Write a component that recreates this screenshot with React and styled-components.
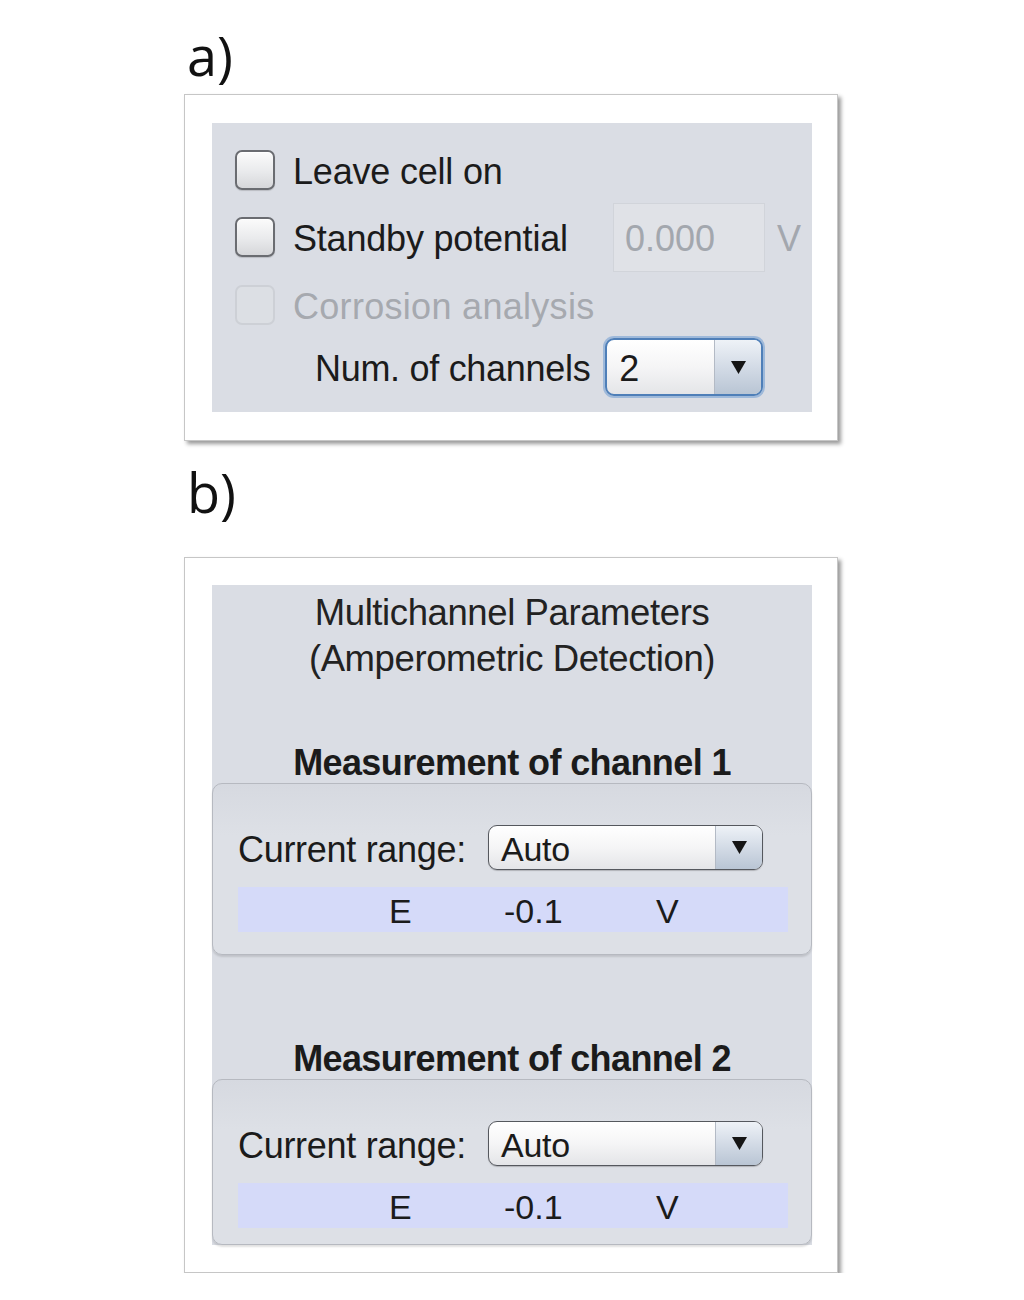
import React from 'react';
import styled, { createGlobalStyle } from 'styled-components';

const GlobalStyle = createGlobalStyle`
    body {
        margin: 0;
        background: #ffffff;
    }
`

const Page = styled.div`
    display: flex;
    flex-direction: column;
    width: 654px;
    padding: 28px 0 0 184px;
    font-family: "Liberation Sans", Arial, sans-serif;
    color: #1b1b1b;
`

const FigureLabel = styled.div`
    font-family: "Open Sans", "Noto Sans", sans-serif;
    font-size: 54px;
    line-height: 54px;
    color: #111;
    padding-left: 3px;
    margin-top: ${p => p.top || 0}px;
    margin-bottom: ${p => p.bottom}px;
`

const Card = styled.div`
    box-sizing: border-box;
    width: 654px;
    background: #fff;
    border: 1px solid #c6c6c6;
    box-shadow: 3px 3px 4px rgba(0, 0, 0, 0.4);
    padding: ${p => p.pad};
`

const Panel = styled.div`
    background: #dadde4;
    display: flex;
    flex-direction: column;
    padding: ${p => p.pad};
`

const Row = styled.div`
    display: flex;
    align-items: center;
    height: ${p => p.h || 40}px;
    margin-top: ${p => p.mt || 0}px;
    padding-left: ${p => p.pl || 0}px;
`

const Check = styled.div`
    box-sizing: border-box;
    width: 40px;
    height: 40px;
    flex: none;
    border-radius: 7px;
    border: 2px solid ${p => p.disabled ? '#cdd0d6' : '#6a6c71'};
    background: ${p => p.disabled
        ? '#dcdfe4'
        : 'linear-gradient(#fbfbfb, #e9eaec 55%, #d6d7da)'};
    box-shadow: ${p => p.disabled ? 'none' : 'inset 0 1px 1px #fff, 0 1px 1px rgba(0,0,0,0.15)'};
`

const CheckText = styled.span`
    font-size: 36px;
    letter-spacing: ${p => p.disabled ? '0.3px' : '-0.2px'};
    margin-left: 18px;
    padding-top: 4px;
    width: ${p => p.w ? `${p.w}px` : 'auto'};
    color: ${p => p.disabled ? '#a6a9af' : '#1b1b1b'};
`

const Field = styled.div`
    box-sizing: border-box;
    flex: none;
    width: 152px;
    height: 69px;
    background: #e0e2e7;
    border: 1px solid #d1d4da;
    display: flex;
    align-items: center;
    padding: 4px 0 0 11px;
    font-size: 36px;
    color: #a3a7ae;
`

const Unit = styled.span`
    font-size: 36px;
    color: #a3a7ae;
    margin-left: 12px;
    padding-top: 4px;
`

const Label = styled.span`
    font-size: ${p => p.size || 36}px;
    letter-spacing: -0.3px;
    padding-top: 4px;
    width: ${p => p.w ? `${p.w}px` : 'auto'};
    margin-right: ${p => p.mr || 0}px;
`

const Combo = styled.div`
    box-sizing: border-box;
    flex: none;
    display: flex;
    width: ${p => p.w}px;
    height: ${p => p.h}px;
    border-radius: 9px;
    border: ${p => p.focus ? '2px solid #4f7fb8' : '1.5px solid #55585e'};
    box-shadow: ${p => p.focus ? '0 0 0 2px rgba(110, 155, 210, 0.55)' : '0 1px 1px rgba(0,0,0,0.2)'};
    background: linear-gradient(#ffffff, #f5f5f6 50%, #e4e5e8);
    overflow: hidden;
`

const ComboText = styled.span`
    flex: 1;
    font-size: ${p => p.size}px;
    padding: 4px 0 0 12px;
    display: flex;
    align-items: center;
    letter-spacing: -0.3px;
`

const ComboArrow = styled.div`
    width: 46px;
    display: flex;
    align-items: center;
    justify-content: center;
    border-left: 1px solid #b3bac5;
    background: linear-gradient(#eef2f7, #d3dbe6 50%, #b9c5d4);
`

const Title = styled.div`
    text-align: center;
    font-size: 36.5px;
    line-height: 46px;
    letter-spacing: -0.4px;
    color: #222;
`

const Heading = styled.div`
    text-align: center;
    font-size: 36px;
    font-weight: bold;
    line-height: 40px;
    letter-spacing: -0.6px;
    margin-top: ${p => p.mt}px;
`

const Group = styled.div`
    border: 1px solid #b6b9c0;
    border-radius: 10px;
    background: linear-gradient(#d6d9e0, #dde0e6 30%, #dde0e6);
    box-shadow: 0 2px 2px rgba(0, 0, 0, 0.12);
    padding: 41px 23px ${p => p.pb}px 25px;
    display: flex;
    flex-direction: column;
    gap: 17px;
`

const ValueRow = styled.div`
    display: flex;
    align-items: center;
    height: 45px;
    background: #d5daf9;
    padding-left: 151px;
    font-size: 34px;
`

const ValueCell = styled.span`
    width: ${p => p.w ? `${p.w}px` : 'auto'};
    padding-top: 4px;
`

const Arrow = () => (
    <svg width="17" height="15" viewBox="0 0 17 15">
        <polygon points="1,1 16,1 8.5,14" fill="#151515" />
    </svg>
)

const Select = ({ value, w, h, size, focus }) => (
    <Combo w={w} h={h} focus={focus}>
        <ComboText size={size}>{value}</ComboText>
        <ComboArrow><Arrow /></ComboArrow>
    </Combo>
)

const Channel = ({ n, pb, mt }) => (
    <>
        <Heading mt={mt}>Measurement of channel {n}</Heading>
        <Group pb={pb}>
            <Row h={45}>
                <Label size={36} w={250}>Current range:</Label>
                <Select value="Auto" w={275} h={45} size={34} />
            </Row>
            <ValueRow>
                <ValueCell w={115}>E</ValueCell>
                <ValueCell w={152}>-0.1</ValueCell>
                <ValueCell>V</ValueCell>
            </ValueRow>
        </Group>
    </>
)

const App = () => {
    return (
        <>
            <GlobalStyle />
            <Page>
                <FigureLabel bottom={12}>a)</FigureLabel>
                <Card pad="28px 25px 28px 27px">
                    <Panel pad="27px 0 16px 23px">
                        <Row>
                            <Check />
                            <CheckText>Leave cell on</CheckText>
                        </Row>
                        <Row mt={27}>
                            <Check />
                            <CheckText w={320}>Standby potential</CheckText>
                            <Field>0.000</Field>
                            <Unit>V</Unit>
                        </Row>
                        <Row mt={28}>
                            <Check disabled />
                            <CheckText disabled>Corrosion analysis</CheckText>
                        </Row>
                        <Row mt={13} h={58} pl={80}>
                            <Label mr={15}>Num. of channels</Label>
                            <Select value="2" w={158} h={58} size={36} focus />
                        </Row>
                    </Panel>
                </Card>

                <FigureLabel top={24} bottom={38}>b)</FigureLabel>
                <Card pad="27px 25px 27px 27px">
                    <Panel pad="5px 0 0 0">
                        <Title>Multichannel Parameters<br />(Amperometric Detection)</Title>
                        <Channel n={1} mt={61} pb={22} />
                        <Channel n={2} mt={84} pb={16} />
                    </Panel>
                </Card>
            </Page>
        </>
    );
};

export default App;
